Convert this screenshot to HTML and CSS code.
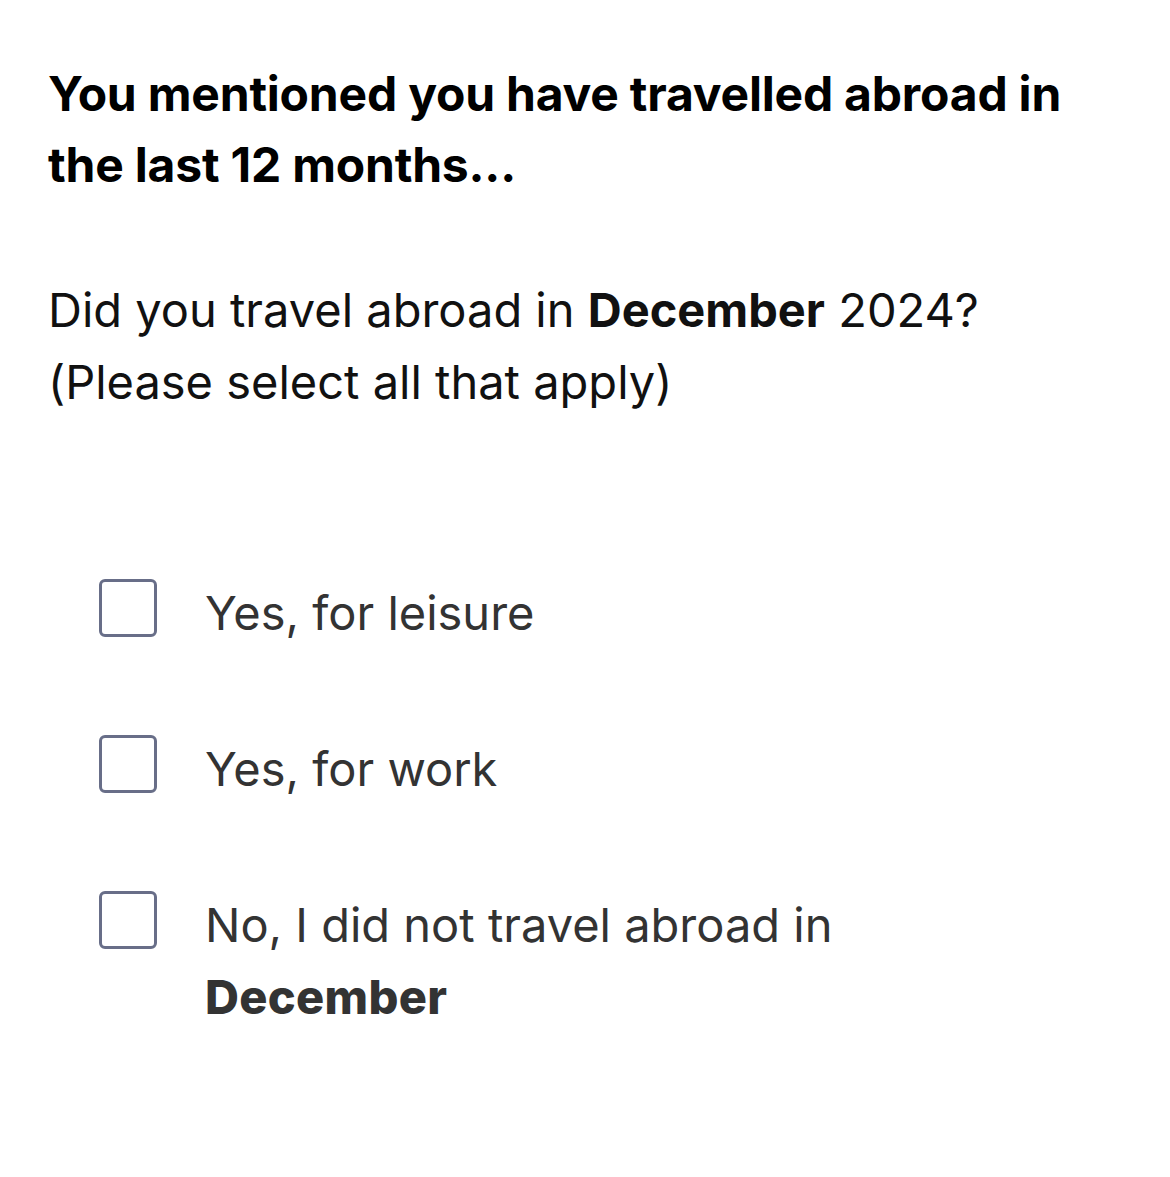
FILE: index.html
```html
<!DOCTYPE html>
<html>
	<head>
		<meta charset="UTF-8">
		<title>Travel survey</title>
		<link rel="stylesheet" href="styles.css">
	</head>
	<body>
		<div class="page">
			<h2 class="intro">You mentioned you have travelled abroad in the last 12 months...</h2>
			<p class="question">Did you travel abroad in <b>December</b> 2024? (Please select all that apply)</p>

			<div class="options">
				<label class="option">
					<span class="box"></span>
					<span class="label">Yes, for leisure</span>
				</label>
				<label class="option">
					<span class="box"></span>
					<span class="label">Yes, for work</span>
				</label>
				<label class="option">
					<span class="box"></span>
					<span class="label">No, I did not travel abroad in <b>December</b></span>
				</label>
			</div>
		</div>
	</body>
</html>
```

FILE: styles.css
```css
body{
	margin: 0;
	background: #fff;
	font-family: Inter, "Liberation Sans", sans-serif;
}
.page{
	padding: 58px 80px 0 48px;
}
.intro{
	margin: 0;
	font-size: 48px;
	font-weight: 700;
	line-height: 71px;
	color: #000;
	letter-spacing: -0.2px;
}
.question{
	margin: 74px 0 0 0;
	font-size: 47px;
	font-weight: 400;
	line-height: 72px;
	color: #111;
	max-width: 1000px;
}
.question b{
	font-weight: 700;
}
.options{
	margin-top: 159px;
	padding-left: 51px;
	display: flex;
	flex-direction: column;
	gap: 84px;
}
.option{
	display: flex;
	align-items: flex-start;
	gap: 48px;
}
.box{
	flex: none;
	width: 52px;
	height: 52px;
	margin-top: 2px;
	border: 3px solid #686e88;
	border-radius: 6px;
}
.label{
	font-size: 47px;
	line-height: 72px;
	color: #333;
	max-width: 680px;
}
.label b{
	font-weight: 800;
	color: #333;
	letter-spacing: 0.3px;
}
```
